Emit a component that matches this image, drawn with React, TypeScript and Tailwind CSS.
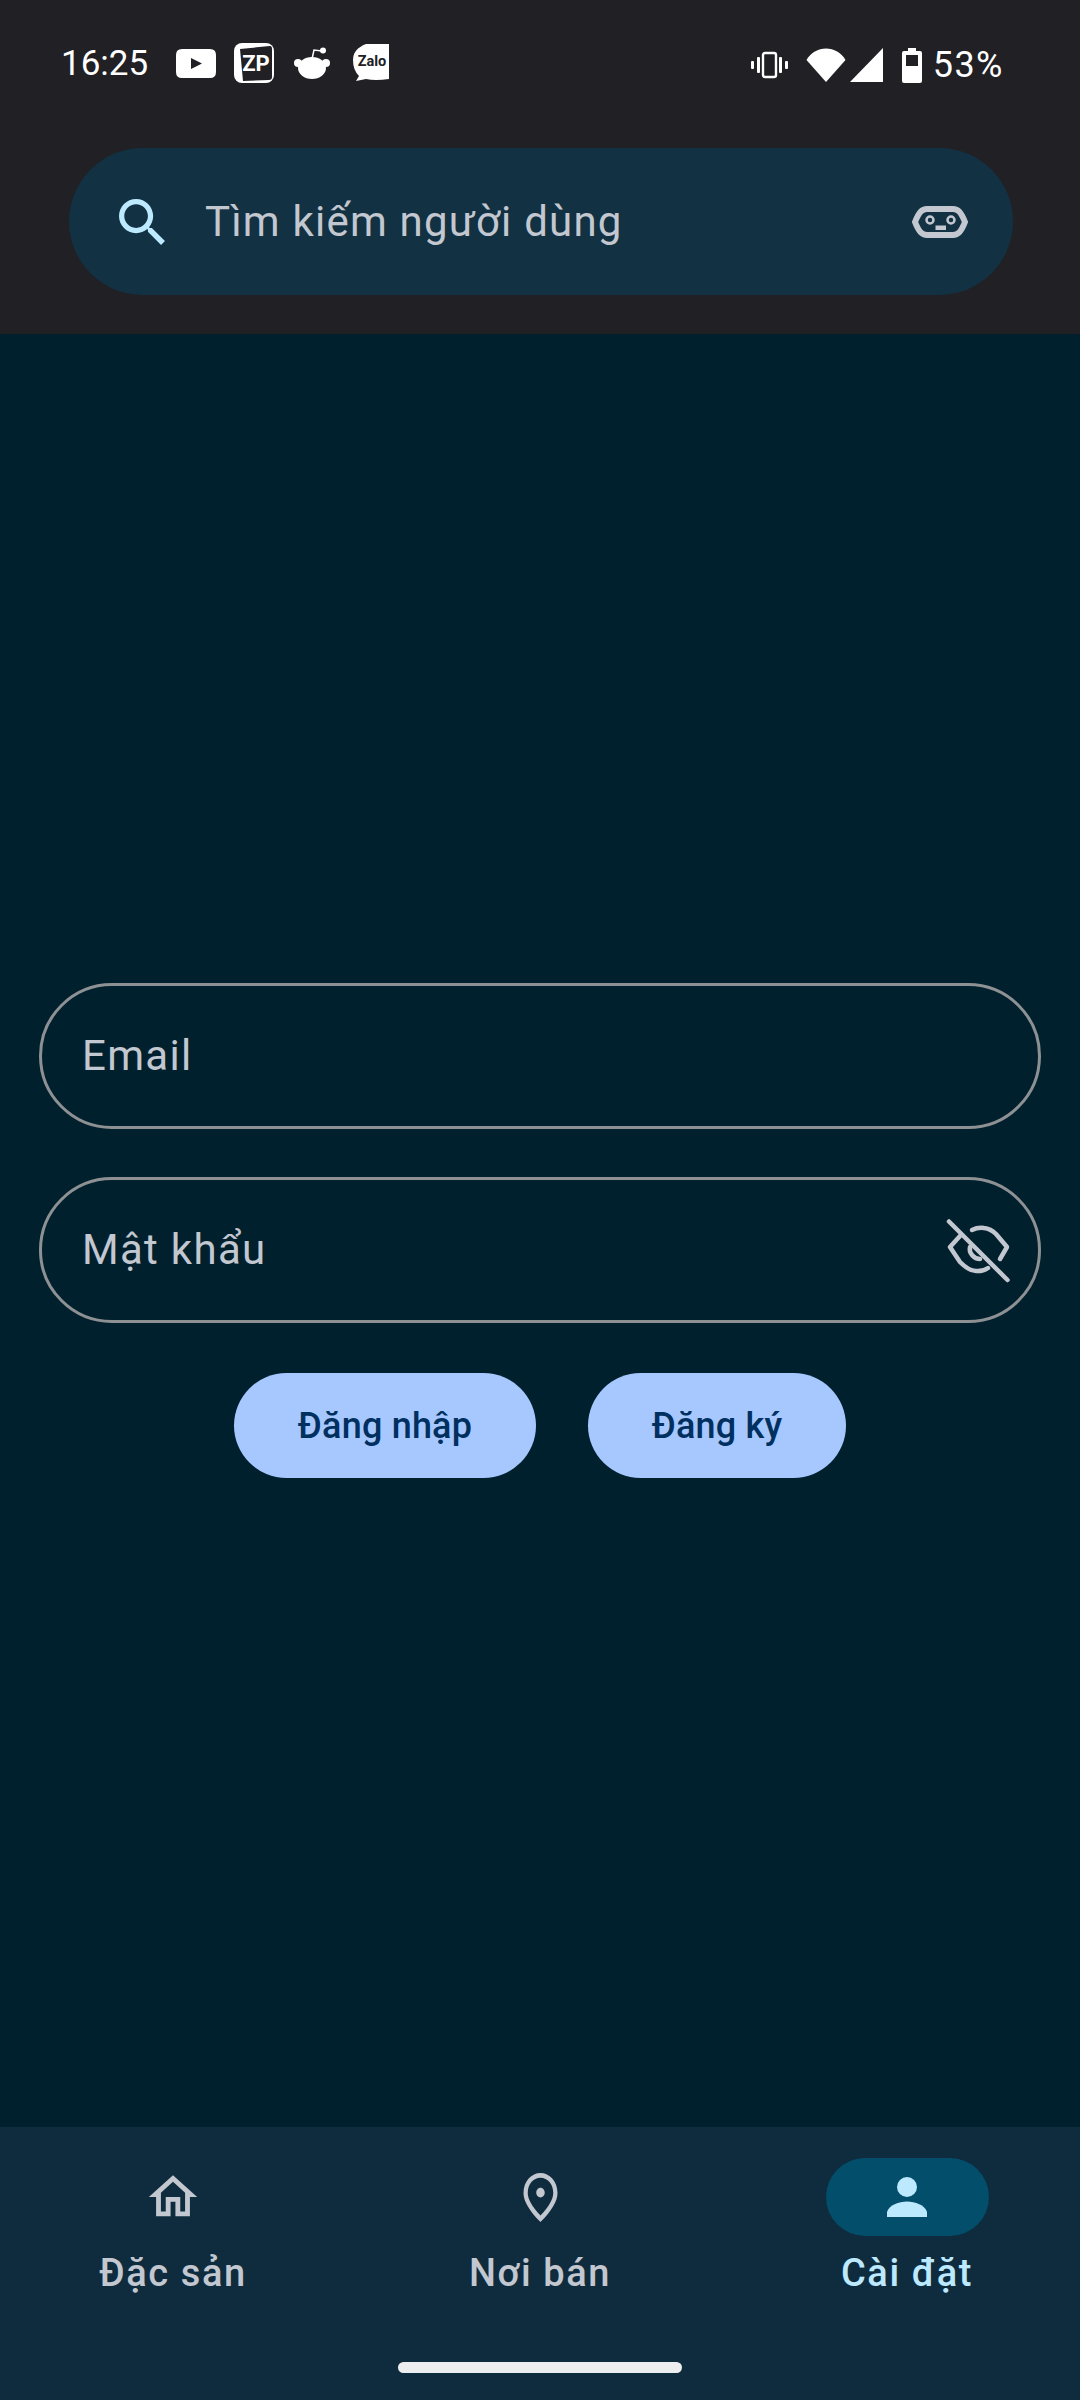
const roboto = { fontFamily: "Roboto, sans-serif" };

const StatusIcons = () => (
	<div className="flex items-center">
		<svg width="38" height="28" viewBox="0 0 38 28" fill="none" className="mr-[18px]">
			<rect x="13" y="2" width="13" height="24" rx="2" stroke="#fff" strokeWidth="2.4" />
			<rect x="7" y="6" width="3" height="16" rx="1" fill="#fff" />
			<rect x="29" y="6" width="3" height="16" rx="1" fill="#fff" />
			<rect x="1" y="10" width="3" height="8" rx="1" fill="#fff" />
			<rect x="35" y="10" width="3" height="8" rx="1" fill="#fff" />
		</svg>
		<svg width="40" height="34" viewBox="0 0 40 34" fill="#fff" className="mr-[4px]">
			<path d="M20 34 L0.5 12 C5 4.500 12 0.500 20 0.500 C28 0.500 35 4.500 39.500 12 Z" />
		</svg>
		<svg width="33" height="34" viewBox="0 0 33 34" fill="#fff" className="mr-[19px]">
			<path d="M0 34 L33 0 V34 Z" />
		</svg>
		<svg width="20" height="35" viewBox="0 0 20 35" className="mr-[11px]">
			<path
				fillRule="evenodd"
				fill="#fff"
				d="M6 0 H14 V3 H18 Q20 3 20 5 V33 Q20 35 18 35 H2 Q0 35 0 33 V5 Q0 3 2 3 H6 Z M4 7 V18 H16 V7 Z"
			/>
		</svg>
		<span className="text-[36px] leading-none text-white tracking-[1.5px]" style={roboto}>
			53%
		</span>
	</div>
);

const AppIcons = () => (
	<div className="flex items-center">
		<svg width="40" height="29" viewBox="0 0 40 29" className="mr-[18px]">
			<path
				fillRule="evenodd"
				fill="#fff"
				d="M6 0 H34 Q40 0 40 6 V23 Q40 29 34 29 H6 Q0 29 0 23 V6 Q0 0 6 0 Z M15 9 V20 L26 14.500 Z"
			/>
		</svg>
		<svg width="40" height="40" viewBox="0 0 40 40" className="mr-[20px]">
			<rect x="0" y="0" width="40" height="40" rx="8" fill="#fff" />
			<path d="M6 6 L36 3 Q38 3 38 6 V34 Q38 37 35 37 L9 38 Z" fill="#202025" />
			<text x="22" y="28" textAnchor="middle" fontSize="22" fontWeight="700" fill="#fff" fontFamily="Roboto, sans-serif">
				ZP
			</text>
		</svg>
		<svg width="36" height="32" viewBox="0 0 36 32" fill="#fff" className="mr-[23px]">
			<ellipse cx="18" cy="21" rx="14" ry="11" />
			<circle cx="4" cy="16" r="4" />
			<circle cx="32" cy="16" r="4" />
			<path d="M18 12 L20 3 L28 4" stroke="#fff" strokeWidth="1.500" fill="none" />
			<circle cx="29" cy="3.500" r="3" />
		</svg>
		<svg width="36" height="38" viewBox="0 0 36 38">
			<path d="M13 0 H36 V35 Q22 37 13 35 L3 37 L6 32 Q0 26 0 16 Q0 5 13 0 Z" fill="#fff" />
			<text x="19" y="22" textAnchor="middle" fontSize="14.500" fontWeight="700" fill="#202025" fontFamily="Roboto, sans-serif">
				Zalo
			</text>
		</svg>
	</div>
);

const NavItem = ({ label, active, children }: { label: string; active?: boolean; children: React.ReactNode }) => (
	<div className="flex-1 flex flex-col items-center pt-[31px]">
		<div
			className={
				active
					? "w-[163px] h-[78px] rounded-full bg-[#024e6b] flex items-center justify-center"
					: "w-[163px] h-[78px] rounded-full flex items-center justify-center"
			}
		>
			{children}
		</div>
		<span
			className={
				active
					? "mt-[13px] text-[38px] leading-[48px] font-medium tracking-[1.6px] text-[#bde9ff]"
					: "mt-[13px] text-[38px] leading-[48px] font-medium tracking-[1.6px] text-[#c2c7d0]"
			}
			style={roboto}
		>
			{label}
		</span>
	</div>
);

export default function App() {
	return (
		<div className="flex flex-col w-[1080px] h-[2400px] bg-[#01202d]" style={roboto}>
			<header className="h-[334px] shrink-0 bg-[#202025] flex flex-col">
				<div className="h-[148px] pl-[61px] pr-[76px] pb-[65px] flex items-end justify-between">
					<div className="flex items-center">
						<span className="w-[86px] mr-[29px] text-[35px] leading-none text-white" style={roboto}>
							16:25
						</span>
						<AppIcons />
					</div>
					<StatusIcons />
				</div>
				<div className="mx-[69px] w-[944px] h-[147px] rounded-full bg-[#123142] flex items-center pl-[50px] pr-[45px]">
					<svg width="46" height="46" viewBox="3 3 17.500 17.500" fill="#bde9ff" className="mr-[40px]">
						<path d="M15.500 14h-.79l-.28-.27C15.410 12.590 16 11.110 16 9.500 16 5.910 13.090 3 9.500 3S3 5.910 3 9.500 5.910 16 9.500 16c1.610 0 3.090-.59 4.230-1.570l.27.28v.79l5 4.990L20.490 19l-4.990-5zm-6 0C7.010 14 5 11.990 5 9.500S7.010 5 9.500 5 14 7.010 14 9.500 11.990 14 9.500 14z" />
					</svg>
					<span className="flex-1 text-[42px] leading-none tracking-[1.200px] text-[#c2c7d0]">Tìm kiếm người dùng</span>
					<svg width="56" height="32" viewBox="0 0 56 32" fill="none">
						<path
							d="M15 3 H41 C46 3 49 6 53 16 C49 26 46 29 41 29 H15 C10 29 7 26 3 16 C7 6 10 3 15 3 Z"
							stroke="#c2c7d0"
							strokeWidth="6"
						/>
						<circle cx="18" cy="14" r="3.500" stroke="#c2c7d0" strokeWidth="2.500" />
						<circle cx="39" cy="14" r="3.500" stroke="#c2c7d0" strokeWidth="2.500" />
						<rect x="23.500" y="19.500" width="10.500" height="4.500" fill="#c2c7d0" />
					</svg>
				</div>
			</header>

			<main className="flex-1 flex flex-col justify-center px-[39px]">
				<div className="h-[146px] rounded-full border-[3px] border-[#8e9194] flex items-center pl-[40px]">
					<span className="text-[42px] leading-none tracking-[1.300px] text-[#c2c7d0]">Email</span>
				</div>
				<div className="mt-[48px] h-[146px] rounded-full border-[3px] border-[#8e9194] flex items-center justify-between pl-[40px] pr-[22px]">
					<span className="text-[42px] leading-none tracking-[1.300px] text-[#c2c7d0]">Mật khẩu</span>
					<svg width="80" height="80" viewBox="0 0 80 80" fill="none" stroke="#c2c7d0" strokeWidth="4.500" strokeLinecap="round" strokeLinejoin="round" className="mt-[4px]">
						<path d="M13 9.500 L71.500 68" />
						<path d="M36 18 C40 16 44 15.500 48 16 C53 16.500 57 19 60 22 L71 35 L64 47" />
						<path d="M24 24 L14 35 L24 50 C29 55 34 59 40 59 C45 59.500 49 58 52 56" />
						<path d="M34 35 C32.500 41 38 47 44 47" />
					</svg>
				</div>
				<div className="mt-[50px] flex justify-center gap-[52px]">
					<button type="button" className="w-[302px] h-[105px] rounded-full bg-[#a6c8ff] text-[36px] font-medium tracking-[0.200px] text-[#003060]">
						Đăng nhập
					</button>
					<button type="button" className="w-[258px] h-[105px] rounded-full bg-[#a6c8ff] text-[36px] font-medium tracking-[0.200px] text-[#003060]">
						Đăng ký
					</button>
				</div>
			</main>

			<nav className="h-[273px] shrink-0 bg-[#0f2c3e] flex flex-col">
				<div className="flex gap-[21px]">
					<NavItem label="Đặc sản">
						<svg width="58" height="58" viewBox="0 0 24 24" fill="#c2c7d0">
							<path d="M12 5.690l5 4.500V18h-2v-6H9v6H7v-7.810l5-4.500M12 3L2 12h3v8h6v-6h2v6h6v-8h3L12 3z" />
						</svg>
					</NavItem>
					<NavItem label="Nơi bán">
						<svg width="51" height="59" viewBox="0 0 24 24" preserveAspectRatio="none" fill="#c2c7d0">
							<path d="M12 12c-1.100 0-2-.9-2-2s.9-2 2-2 2 .9 2 2-.9 2-2 2zm6-1.800C18 6.570 15.350 4 12 4s-6 2.570-6 6.200c0 2.340 1.950 5.440 6 9.140 4.050-3.700 6-6.800 6-9.140zM12 2c4.200 0 8 3.220 8 8.200 0 3.320-2.670 7.250-8 11.800-5.330-4.550-8-8.480-8-11.800C4 5.220 7.800 2 12 2z" />
						</svg>
					</NavItem>
					<NavItem label="Cài đặt" active>
						<svg width="40" height="40" viewBox="0 0 40 40" fill="#bde9ff">
							<circle cx="20" cy="10" r="10" />
							<path d="M0 40 V35 C2 28 12 24.500 20 24.500 C28 24.500 38 28 40 35 V40 Z" />
						</svg>
					</NavItem>
				</div>
				<div className="mt-auto mb-[27px] mx-auto w-[284px] h-[11px] rounded-full bg-[#eceef0]" />
			</nav>
		</div>
	);
}
